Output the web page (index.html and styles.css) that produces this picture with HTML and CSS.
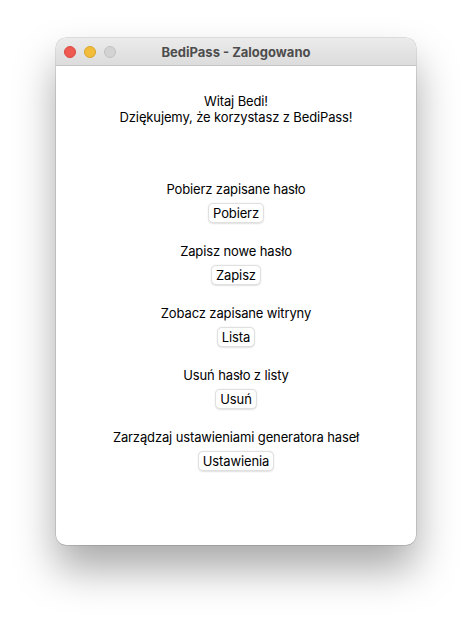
FILE: index.html
```html
<!DOCTYPE html>
<html lang="pl">
<head>
<meta charset="utf-8">
<title>BediPass - Zalogowano</title>
<link rel="stylesheet" href="styles.css">
</head>
<body>
<div class="window">
  <div class="titlebar">
    <div class="lights">
      <span class="light red"></span>
      <span class="light yellow"></span>
      <span class="light gray"></span>
    </div>
    <div class="title">BediPass - Zalogowano</div>
  </div>
  <div class="content">
    <div class="greeting">
      <div>Witaj Bedi!</div>
      <div>Dziękujemy, że korzystasz z BediPass!</div>
    </div>
    <div class="section">
      <div class="label">Pobierz zapisane hasło</div>
      <button class="btn">Pobierz</button>
    </div>
    <div class="section">
      <div class="label">Zapisz nowe hasło</div>
      <button class="btn">Zapisz</button>
    </div>
    <div class="section">
      <div class="label">Zobacz zapisane witryny</div>
      <button class="btn">Lista</button>
    </div>
    <div class="section">
      <div class="label">Usuń hasło z listy</div>
      <button class="btn">Usuń</button>
    </div>
    <div class="section">
      <div class="label">Zarządzaj ustawieniami generatora haseł</div>
      <button class="btn">Ustawienia</button>
    </div>
  </div>
</div>
</body>
</html>
```

FILE: styles.css
```css
html, body {
  margin: 0;
  padding: 0;
  background: #ffffff;
}
body {
  min-height: 620px;
  box-sizing: border-box;
  padding: 38px 0 0 56px;
  font-family: "Inter", "Roboto", "Liberation Sans", sans-serif;
  font-size: 13px;
  letter-spacing: -0.13px;
  color: #000000;
}
.window {
  width: 360px;
  height: 507px;
  box-sizing: border-box;
  border-radius: 10px;
  background: #ffffff;
  overflow: hidden;
  box-shadow: 0 0 0 0.5px rgba(0,0,0,0.22), 0 24px 42px rgba(0,0,0,0.34);
  display: flex;
  flex-direction: column;
}
.titlebar {
  height: 27px;
  flex: none;
  background: linear-gradient(#ebebeb, #dcdcdc);
  border-bottom: 1px solid #c4c4c4;
  display: flex;
  align-items: center;
  position: relative;
}
.lights {
  display: flex;
  gap: 8px;
  padding-left: 8px;
}
.light {
  width: 12px;
  height: 12px;
  border-radius: 50%;
  box-sizing: border-box;
}
.red { background: #ee5a52; border: 0.5px solid #d74840; }
.yellow { background: #f2bd3a; border: 0.5px solid #d9a42a; }
.gray { background: #d3d3d3; border: 0.5px solid #c0c0c0; }
.title {
  position: absolute;
  left: 0;
  right: 0;
  text-align: center;
  font-weight: 700;
  font-size: 13px;
  letter-spacing: 0;
  color: #4d4d4d;
  pointer-events: none;
}
.content {
  display: flex;
  flex-direction: column;
  align-items: center;
  padding-top: 27px;
}
.greeting {
  text-align: center;
  line-height: 16px;
  margin-bottom: 56px;
}
.section {
  display: flex;
  flex-direction: column;
  align-items: center;
  gap: 6px;
  margin-bottom: 20px;
}
.label {
  line-height: 16px;
}
.btn {
  font-family: inherit;
  font-size: 13px;
  letter-spacing: -0.13px;
  color: #000000;
  height: 20px;
  padding: 0 4px;
  line-height: 18px;
  background: #ffffff;
  border: 1px solid #e0e0e0;
  border-radius: 5px;
  box-shadow: 0 0.5px 1.5px rgba(0,0,0,0.12);
}
```
